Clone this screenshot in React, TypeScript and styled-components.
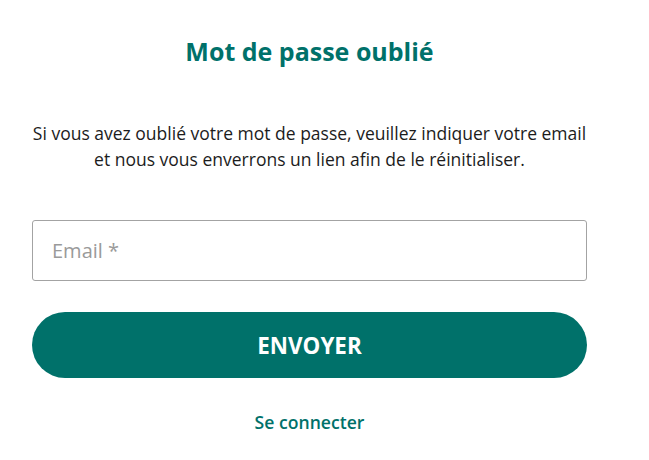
import React from 'react';
import styled, { createGlobalStyle } from 'styled-components';

const GlobalStyle = createGlobalStyle`
    body {
        margin: 0;
        background: #ffffff;
        font-family: 'Open Sans', 'Noto Sans', sans-serif;
    }
`;

const Page = styled.div`
    padding: 34px 0 0 32px;
`;

const Form = styled.form`
    width: 555px;
    display: flex;
    flex-direction: column;
    align-items: center;
`;

const Title = styled.h1`
    margin: 0;
    font-size: 25px;
    font-weight: 700;
    color: #00716a;
    text-align: center;
`;

const Intro = styled.p`
    margin: 52px -4px 0;
    font-size: 17.5px;
    line-height: 26px;
    color: #1c1c1c;
    text-align: center;
    white-space: nowrap;
`;

const EmailInput = styled.input`
    box-sizing: border-box;
    width: 100%;
    height: 61px;
    margin-top: 48px;
    padding: 0 19px;
    border: 1px solid #a3a3a3;
    border-radius: 3px;
    font-family: inherit;
    font-size: 20px;
    color: #1c1c1c;
    outline: none;

    &::placeholder {
        color: #9a9a9a;
    }
`;

const SubmitButton = styled.button`
    width: 100%;
    height: 66px;
    margin-top: 31px;
    border: none;
    border-radius: 33px;
    background: #00716a;
    color: #ffffff;
    font-family: inherit;
    font-size: 22.4px;
    font-weight: 700;
    cursor: pointer;
`;

const LoginLink = styled.a`
    margin-top: 32px;
    font-size: 17.6px;
    font-weight: 600;
    color: #00716a;
    text-decoration: none;
    cursor: pointer;
`;

const App = () => (
    <>
        <GlobalStyle />
        <Page>
            <Form onSubmit={(e) => e.preventDefault()}>
                <Title>Mot de passe oublié</Title>
                <Intro>
                    Si vous avez oublié votre mot de passe, veuillez indiquer votre email
                    <br />
                    et nous vous enverrons un lien afin de le réinitialiser.
                </Intro>
                <EmailInput type="email" placeholder="Email *" />
                <SubmitButton type="submit">ENVOYER</SubmitButton>
                <LoginLink href="#">Se connecter</LoginLink>
            </Form>
        </Page>
    </>
);

export default App;
